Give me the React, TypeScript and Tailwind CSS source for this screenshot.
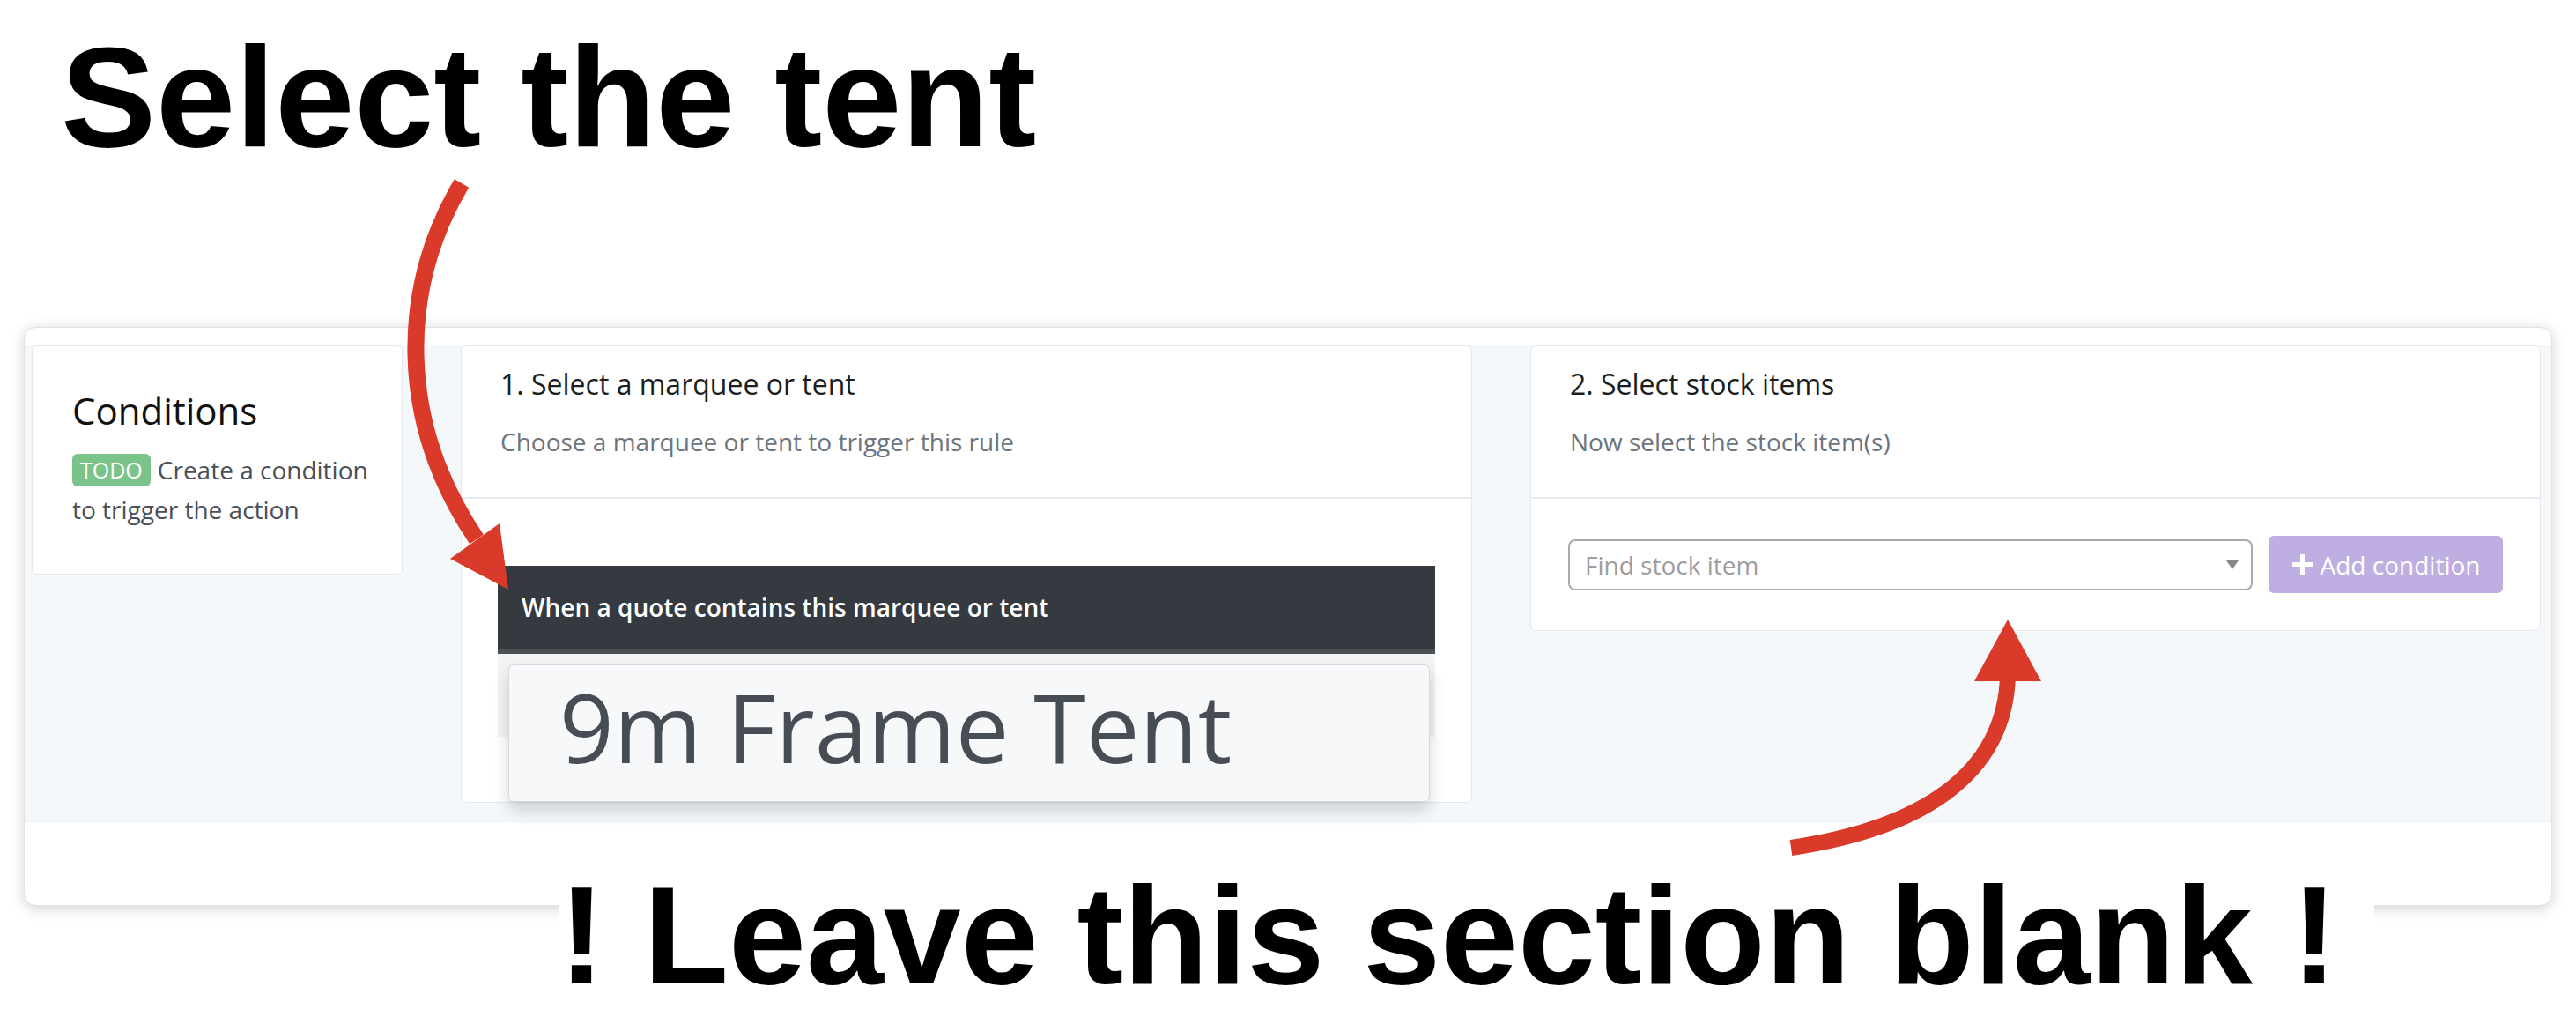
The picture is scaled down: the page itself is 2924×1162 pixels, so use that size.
import React from "react";

const ui = "font-['Open_Sans',sans-serif]";

const CardHeader: React.FC<{ title: string; subtitle: string }> = ({
  title,
  subtitle,
}) => (
  <div className="px-[44px] pt-[23px] pb-[43px] border-b-2 border-[#e8ebf1]">
    <div className="text-[32px] leading-[40px] text-[#1b1e21]">{title}</div>
    <div className="mt-[25px] text-[28px] leading-[40px] text-[#6c757d]">
      {subtitle}
    </div>
  </div>
);

const Arrows = () => (
  <svg
    className="absolute inset-0 pointer-events-none"
    width={2924}
    height={1162}
    viewBox="0 0 2924 1162"
  >
    <path
      d="M 524 208 C 452 330, 452 480, 541 612"
      fill="none"
      stroke="#d93a29"
      strokeWidth={19}
    />
    <polygon points="511,634 567,594 577,669" fill="#d93a29" />
    <path
      d="M 2279 768 C 2275 880, 2180 940, 2033 962"
      fill="none"
      stroke="#d93a29"
      strokeWidth={18}
    />
    <polygon points="2241,773 2317,773 2279,703" fill="#d93a29" />
  </svg>
);

export default function App() {
  return (
    <div className="relative w-[2924px] h-[1162px] bg-white overflow-hidden">
      <h1 className="pl-[69px] pt-[29px] text-[162px] leading-none font-bold text-black font-['Liberation_Sans',Arial,sans-serif]">
        Select the tent
      </h1>

      <div
        className={`mt-[180px] ml-[27px] w-[2870px] h-[657px] rounded-[14px] bg-white border border-[#e2e2e2] shadow-[0_3px_16px_rgba(0,0,0,0.18)] pt-[20px] ${ui}`}
      >
        <div className="h-[542px] bg-[#f5f8fb] flex items-start gap-[66px] pl-[8px]">
          {/* conditions */}
          <div className="w-[421px] h-[260px] shrink-0 bg-white border border-[#e4e7ee] rounded-[6px] pl-[45px] pt-[48px]">
            <div className="text-[42px] leading-[50px] text-[#111]">
              Conditions
            </div>
            <div className="mt-[20px] text-[28px] leading-[45px] text-[#495057]">
              <div className="flex items-center gap-[8px]">
                <span className="bg-[#7bc389] text-white text-[25px] leading-[37px] px-[9px] rounded-[6px]">
                  TODO
                </span>
                <span>Create a condition</span>
              </div>
              <div>to trigger the action</div>
            </div>
          </div>

          {/* step 1 */}
          <div className="w-[1148px] shrink-0 bg-white border border-[#e4e7ee] rounded-[6px]">
            <CardHeader
              title="1. Select a marquee or tent"
              subtitle="Choose a marquee or tent to trigger this rule"
            />
            <div className="px-[41px] pt-[76px]">
              <div className="h-[100px] bg-[#343a40] border-b-[5px] border-[#4b5057] pl-[27px] pt-[27px] text-[28px] leading-[40px] font-semibold text-white">
                When a quote contains this marquee or tent
              </div>
              <div className="pt-[12px] pl-[12px] pr-[6px] bg-[linear-gradient(#f2f3f5_94px,transparent_94px)]">
                <div className="h-[156px] bg-[#f7f8fa] border border-[#d6d8dd] rounded-[6px] shadow-[0_10px_18px_rgba(0,0,0,0.16)] pl-[57px] pt-[16px]">
                  <div className="text-[108px] leading-none font-medium text-[#474d55] blur-[0.6px]">
                    9m Frame Tent
                  </div>
                </div>
              </div>
            </div>
          </div>

          {/* step 2 */}
          <div className="w-[1147px] shrink-0 bg-white border border-[#e4e7ee] rounded-[6px]">
            <CardHeader
              title="2. Select stock items"
              subtitle="Now select the stock item(s)"
            />
            <div className="flex items-center gap-[18px] px-[42px] pt-[42px] pb-[42px]">
              <div className="flex-1 h-[58px] border-2 border-[#aaaaaa] rounded-[8px] flex items-center justify-between pl-[17px] pr-[14px]">
                <span className="text-[28px] text-[#9d9d9d]">
                  Find stock item
                </span>
                <span className="w-0 h-0 border-l-[7px] border-r-[7px] border-t-[10px] border-l-transparent border-r-transparent border-t-[#888]" />
              </div>
              <button className="w-[266px] h-[65px] rounded-[6px] bg-[#bfaee2] text-white text-[28px] flex items-center justify-center gap-[8px]">
                <svg width="25" height="25" viewBox="0 0 25 25">
                  <path d="M12.5 1v23M1 12.5h23" stroke="white" strokeWidth="5" />
                </svg>
                Add condition
              </button>
            </div>
          </div>
        </div>
      </div>

      <Arrows />

      <div className="absolute left-[634px] top-[982px] w-[2061px] h-[180px] bg-white text-[158px] leading-none font-bold text-black font-['Liberation_Sans',Arial,sans-serif] whitespace-nowrap">
        ! Leave this section blank !
      </div>
    </div>
  );
}
